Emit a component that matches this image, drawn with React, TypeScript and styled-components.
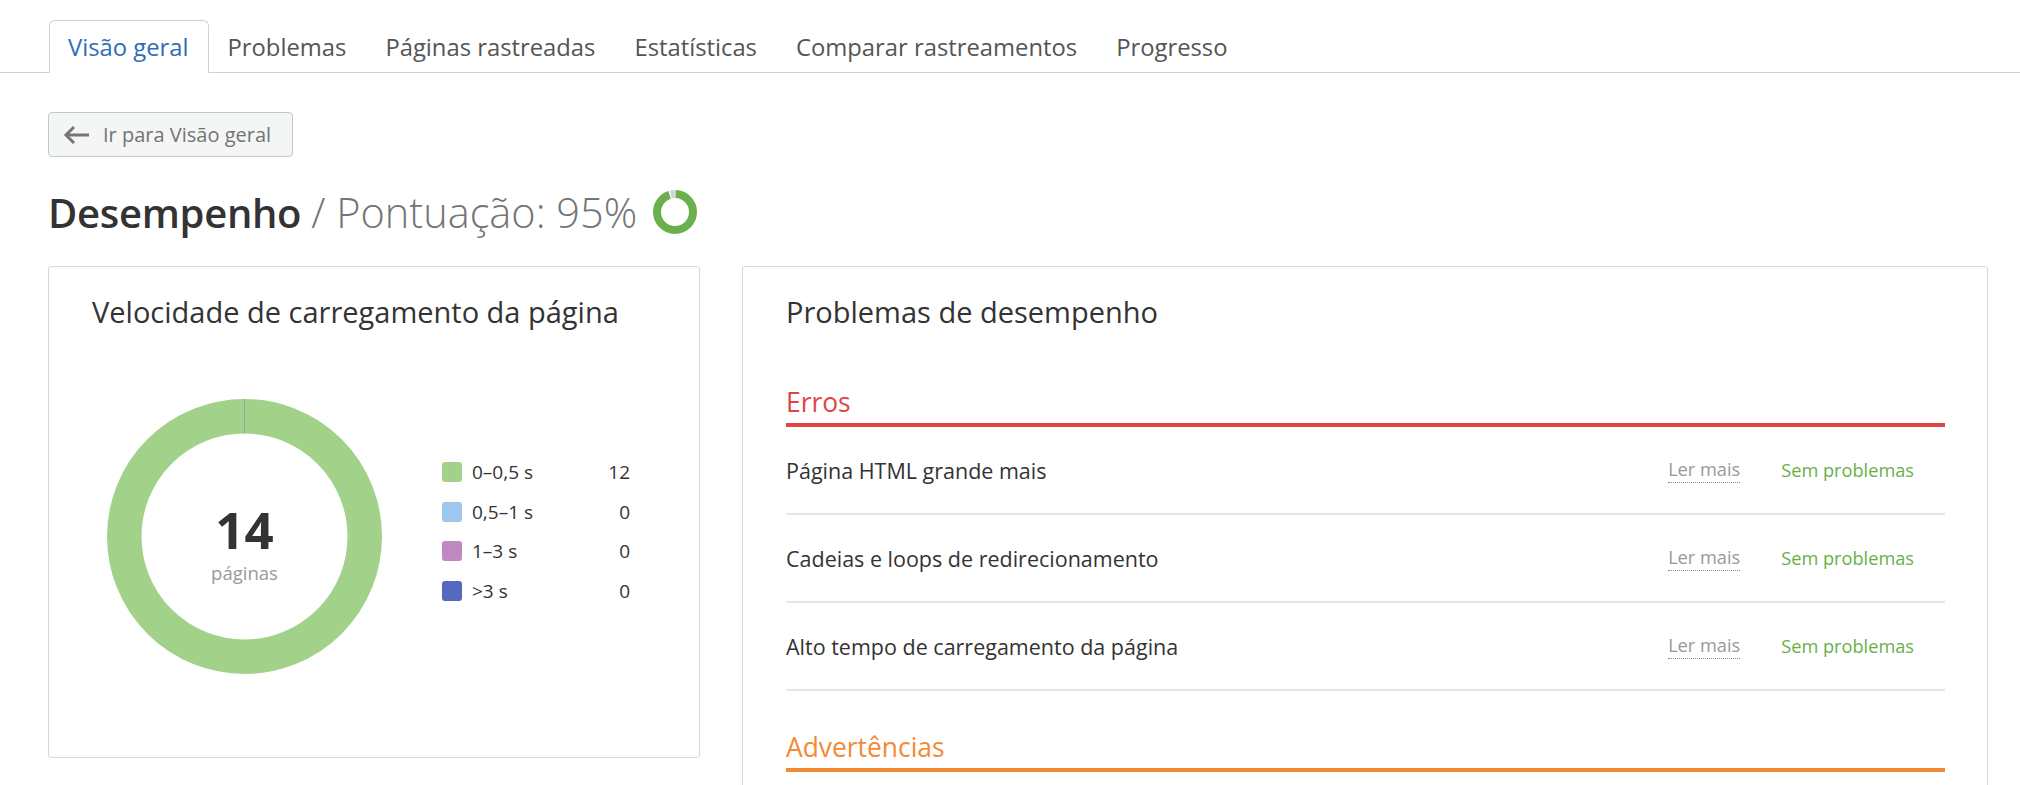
import React from "react";
import styled, { createGlobalStyle } from "styled-components";

const GlobalStyle = createGlobalStyle`
  html, body {
    margin: 0;
    padding: 0;
    background: #ffffff;
  }
  body {
    font-family: "Open Sans", "Noto Sans", Arial, sans-serif;
    color: #333333;
    overflow: hidden;
  }
  * {
    box-sizing: border-box;
  }
`;

const TabBar = styled.nav`
  display: flex;
  align-items: flex-end;
  padding: 20px 0 0 49px;
  border-bottom: 1px solid #cfd2d4;
`;

const Tab = styled.div<{ $active?: boolean }>`
  display: flex;
  align-items: center;
  height: 53px;
  margin-bottom: -1px;
  padding: 0 19px 0 18px;
  font-size: 23.8px;
  font-weight: 500;
  color: ${(p) => (p.$active ? "#2f6db6" : "#555555")};
  background: ${(p) => (p.$active ? "#ffffff" : "transparent")};
  border: 1px solid ${(p) => (p.$active ? "#cfd2d4" : "transparent")};
  border-bottom: ${(p) => (p.$active ? "1px solid #ffffff" : "1px solid #cfd2d4")};
  border-radius: 6px 6px 0 0;
  white-space: nowrap;
`;

const Content = styled.main`
  padding: 39px 32px 0 48px;
`;

const BackButton = styled.button`
  display: inline-flex;
  align-items: center;
  gap: 13px;
  height: 45px;
  padding: 0 21px 0 14px;
  background: #f4f6f6;
  border: 1px solid #c3c8cb;
  border-radius: 4px;
  font-family: inherit;
  font-size: 20px;
  color: #737373;
  cursor: pointer;
`;

const TitleRow = styled.div`
  display: flex;
  align-items: center;
  height: 56px;
  margin-top: 27px;
`;

const PageTitle = styled.h1`
  margin: 0;
  font-size: 40px;
  font-weight: 600;
  color: #333333;
  letter-spacing: -0.3px;
  white-space: nowrap;
`;

const Score = styled.span`
  margin-left: 10px;
  font-size: 41.5px;
  font-weight: 300;
  color: #757575;
  white-space: nowrap;
`;

const ScoreRing = styled.svg`
  margin-left: 16px;
  flex: none;
`;

const Cards = styled.div`
  display: flex;
  align-items: flex-start;
  gap: 42px;
  margin-top: 26px;
`;

const Card = styled.section<{ $width?: number; $height?: number }>`
  flex: ${(p) => (p.$width ? `0 0 ${p.$width}px` : "1 1 auto")};
  height: ${(p) => (p.$height ? `${p.$height}px` : "auto")};
  min-height: ${(p) => (p.$height ? "0" : "560px")};
  padding: 25px 42px 0 43px;
  border: 1px solid #d4d6d8;
  border-radius: 3px;
  background: #ffffff;
`;

const CardTitle = styled.h2`
  margin: 0;
  font-size: 29px;
  line-height: 40px;
  font-weight: 400;
  color: #333333;
  white-space: nowrap;
`;

const ChartRow = styled.div`
  display: flex;
  align-items: center;
  gap: 60px;
  margin-top: 67px;
  padding-left: 15px;
`;

const DonutWrap = styled.div`
  position: relative;
  width: 275px;
  height: 275px;
  flex: none;
`;

const DonutLabel = styled.div`
  position: absolute;
  top: 105px;
  left: 0;
  right: 0;
  display: flex;
  flex-direction: column;
  align-items: center;
`;

const DonutValue = styled.div`
  font-size: 51px;
  line-height: 50px;
  font-weight: 700;
  color: #333333;
`;

const DonutCaption = styled.div`
  margin-top: 7px;
  font-size: 18.5px;
  line-height: 24px;
  color: #999999;
`;

const Legend = styled.ul`
  list-style: none;
  margin: 0 0 10px;
  padding: 0;
  width: 188px;
  display: flex;
  flex-direction: column;
  gap: 19.5px;
`;

const LegendRow = styled.li`
  display: flex;
  align-items: center;
  height: 20px;
  font-size: 19px;
  color: #333333;
`;

const Swatch = styled.span<{ $color: string }>`
  width: 20px;
  height: 20px;
  border-radius: 3px;
  background: ${(p) => p.$color};
  flex: none;
  margin-right: 10px;
`;

const LegendLabel = styled.span`
  flex: 1;
  white-space: nowrap;
`;

const LegendCount = styled.span`
  text-align: right;
`;

const SectionHead = styled.h3<{ $color: string; $top: number }>`
  margin: ${(p) => p.$top}px 0 0;
  padding-bottom: 4px;
  font-size: 26.4px;
  line-height: 34px;
  font-weight: 400;
  color: ${(p) => p.$color};
  border-bottom: 4px solid ${(p) => p.$color};
`;

const IssueRow = styled.div`
  display: flex;
  align-items: center;
  height: 88px;
  padding-right: 31px;
  border-bottom: 2px solid #e2e6ea;
`;

const IssueName = styled.span`
  flex: 1;
  font-size: 21.5px;
  color: #333333;
  white-space: nowrap;
`;

const ReadMore = styled.a`
  font-size: 18.2px;
  line-height: 25px;
  color: #999999;
  text-decoration: none;
  border-bottom: 1px dotted #8a8a8a;
`;

const Status = styled.span`
  margin-left: 41px;
  font-size: 18.2px;
  color: #67b14a;
  white-space: nowrap;
`;

const tabs = [
  "Visão geral",
  "Problemas",
  "Páginas rastreadas",
  "Estatísticas",
  "Comparar rastreamentos",
  "Progresso",
];

const legend = [
  { label: "0–0,5 s", color: "#a2d28a", count: 12 },
  { label: "0,5–1 s", color: "#9fc7ee", count: 0 },
  { label: "1–3 s", color: "#c088c1", count: 0 },
  { label: ">3 s", color: "#5469bf", count: 0 },
];

const errors = [
  "Página HTML grande mais",
  "Cadeias e loops de redirecionamento",
  "Alto tempo de carregamento da página",
];

const ArrowLeft = () => (
  <svg width="27" height="20" viewBox="0 0 27 20" fill="none">
    <path d="M26 10H3" stroke="#757575" strokeWidth="3" />
    <path d="M11 2L3 10l8 8" stroke="#757575" strokeWidth="3" />
  </svg>
);

const ScoreIcon = ({ value }: { value: number }) => {
  const r = 18;
  const c = 2 * Math.PI * r;
  const green = c * value;
  return (
    <ScoreRing width="44" height="44" viewBox="0 0 44 44">
      <g transform="rotate(-90 22 22)" fill="none" strokeWidth="8">
        <circle
          cx="22"
          cy="22"
          r={r}
          stroke="#6ab04c"
          strokeDasharray={`${green - 1.2} ${c}`}
          strokeDashoffset={-0.6}
        />
        <circle
          cx="22"
          cy="22"
          r={r}
          stroke="#d4d4d4"
          strokeDasharray={`${c - green - 1.2} ${c}`}
          strokeDashoffset={-(green + 0.6)}
        />
      </g>
    </ScoreRing>
  );
};

const Donut = () => (
  <DonutWrap>
    <svg width="275" height="275" viewBox="0 0 275 275">
      <circle cx="137.5" cy="137.5" r="120.25" fill="none" stroke="#a2d28a" strokeWidth="34.5" />
      <line x1="137.5" y1="0" x2="137.5" y2="34.5" stroke="#9aa89a" strokeWidth="1" />
    </svg>
    <DonutLabel>
      <DonutValue>14</DonutValue>
      <DonutCaption>páginas</DonutCaption>
    </DonutLabel>
  </DonutWrap>
);

export default function App() {
  return (
    <>
      <GlobalStyle />
      <TabBar>
        {tabs.map((t, i) => (
          <Tab key={t} $active={i === 0}>
            {t}
          </Tab>
        ))}
      </TabBar>
      <Content>
        <BackButton>
          <ArrowLeft />
          Ir para Visão geral
        </BackButton>
        <TitleRow>
          <PageTitle>Desempenho</PageTitle>
          <Score>/ Pontuação: 95%</Score>
          <ScoreIcon value={0.95} />
        </TitleRow>
        <Cards>
          <Card $width={652} $height={492}>
            <CardTitle>Velocidade de carregamento da página</CardTitle>
            <ChartRow>
              <Donut />
              <Legend>
                {legend.map((l) => (
                  <LegendRow key={l.label}>
                    <Swatch $color={l.color} />
                    <LegendLabel>{l.label}</LegendLabel>
                    <LegendCount>{l.count}</LegendCount>
                  </LegendRow>
                ))}
              </Legend>
            </ChartRow>
          </Card>
          <Card>
            <CardTitle>Problemas de desempenho</CardTitle>
            <SectionHead $color="#df4545" $top={53}>
              Erros
            </SectionHead>
            {errors.map((e) => (
              <IssueRow key={e}>
                <IssueName>{e}</IssueName>
                <ReadMore href="#">Ler mais</ReadMore>
                <Status>Sem problemas</Status>
              </IssueRow>
            ))}
            <SectionHead $color="#f28a35" $top={39}>
              Advertências
            </SectionHead>
          </Card>
        </Cards>
      </Content>
    </>
  );
}
